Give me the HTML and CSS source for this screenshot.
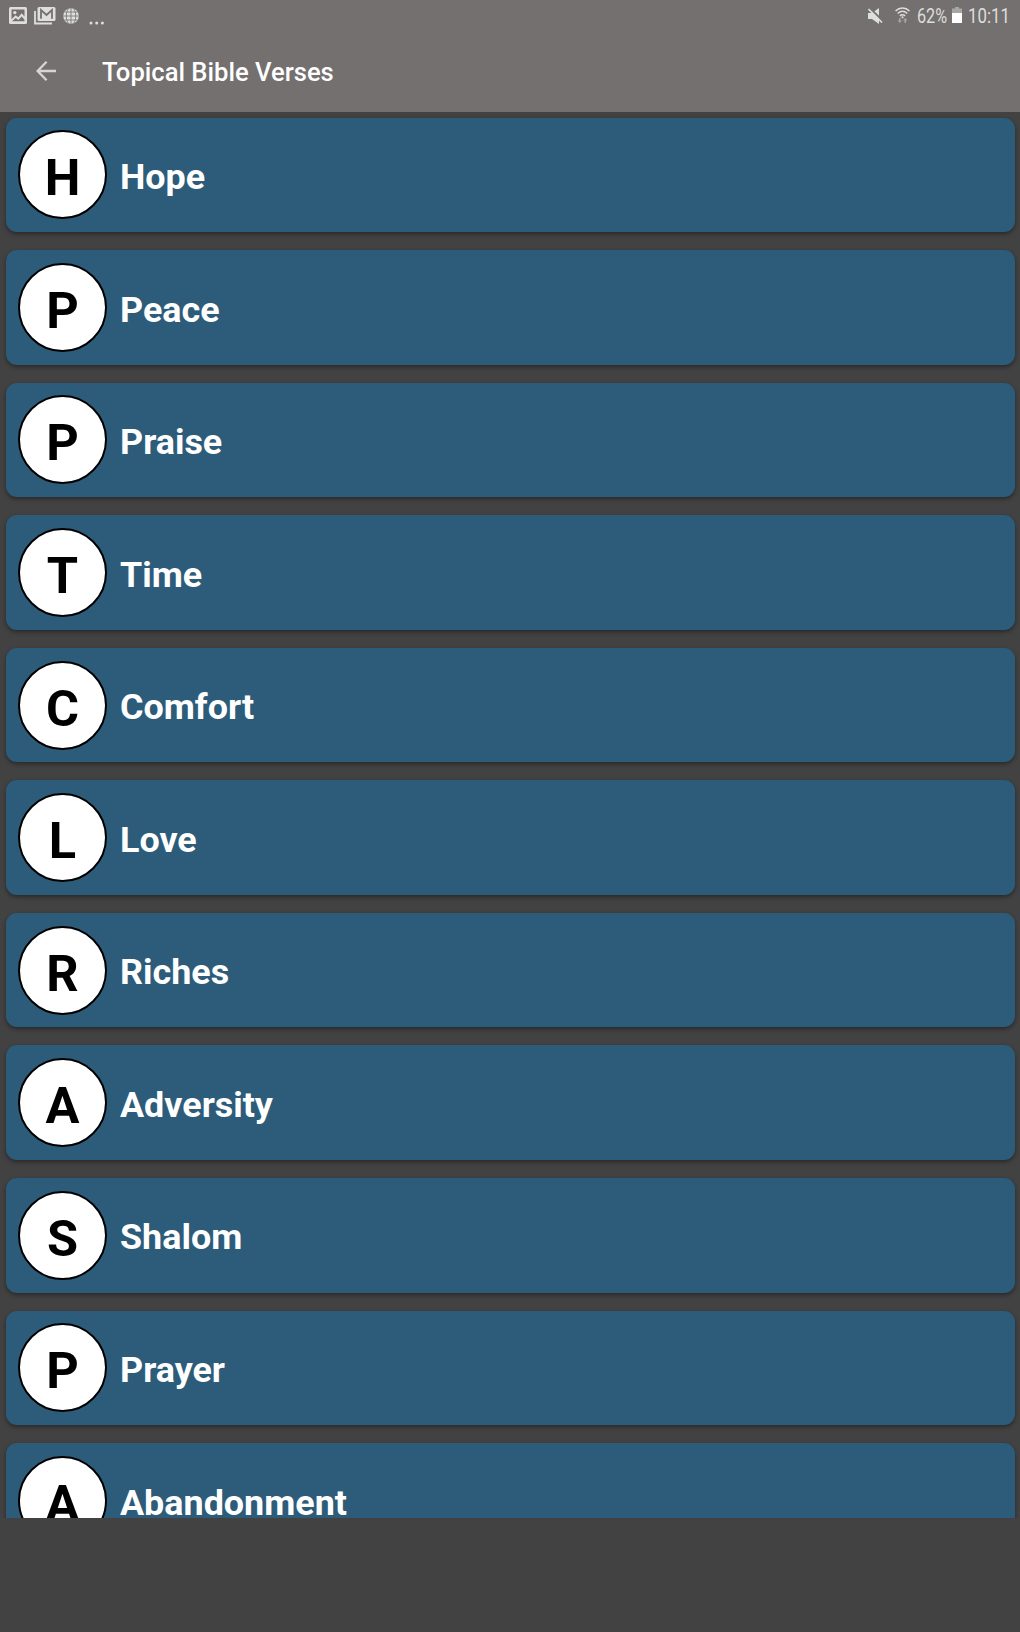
FILE: index.html
```html
<!DOCTYPE html>
<html lang="en">

<head>
    <meta charset="UTF-8">
    <meta name="viewport" content="width=device-width, initial-scale=1.0">
    <title>Topical Bible Verses</title>
    <link rel="stylesheet" href="styles.css">
</head>

<body>
    <div class="header">
        <div class="status-bar">
            <div class="status-left">
                <svg class="icon-image" width="18" height="18" viewBox="0 0 18 18">
                    <rect width="18" height="17" rx="1.500" fill="#dededc"/>
                    <path fill="#73706f" d="M2.500 2.500h13v7l-2.800-3.200-3.500 4-2.600-2-4.100 4z"/>
                    <circle cx="5.800" cy="5.600" r="1.700" fill="#dededc"/>
                    <path fill="#73706f" d="M3 14.300l3.700-3.300 2.700 2 3.300-3.600 2.800 3.300v1.600z"/>
                </svg>
                <svg class="icon-mail" width="22" height="18" viewBox="0 0 22 18">
                    <path fill="none" stroke="#dededc" stroke-width="1.800" d="M1 4v12.500h17"/>
                    <rect x="3.500" y="0" width="18" height="14" rx="1.500" fill="#dededc"/>
                    <path fill="none" stroke="#73706f" stroke-width="1.800" d="M7 11.700V3l5.500 5L18 3v8.700"/>
                </svg>
                <svg class="icon-globe" width="16" height="16" viewBox="0 0 16 16">
                    <circle cx="8" cy="8" r="7.800" fill="#dededc"/>
                    <path fill="none" stroke="#73706f" stroke-width="0.800" d="M8 0v16M0 8h16M1.500 4h13M1.500 12h13M5.500.5c-3 4.500-3 10.500 0 15M10.500.5c3 4.500 3 10.500 0 15"/>
                </svg>
                <svg class="icon-more" width="16" height="4" viewBox="0 0 16 4">
                    <circle cx="2" cy="2" r="1.500" fill="#dededc"/>
                    <circle cx="7.700" cy="2" r="1.500" fill="#dededc"/>
                    <circle cx="13.400" cy="2" r="1.500" fill="#dededc"/>
                </svg>
            </div>
            <div class="status-right">
                <svg class="icon-mute" width="15" height="16" viewBox="0 0 15 16">
                    <path fill="#dededc" d="M0 5h4l7-5v16l-7-5H0z"/>
                    <path stroke="#73706f" stroke-width="2" d="M1.500 0l13.500 13"/>
                    <path stroke="#dededc" stroke-width="1.700" d="M.5 1l13.500 13.500"/>
                </svg>
                <svg class="icon-wifi" width="15" height="17" viewBox="0 0 15 17">
                    <path fill="none" stroke="#dededc" stroke-width="1.500" d="M.5 4c4-4 10-4 14 0M2.700 6.500c3-2.700 6.600-2.700 9.600 0M4.900 8.900c1.700-1.500 3.500-1.500 5.200 0"/>
                    <circle cx="7.500" cy="10.300" r="1.100" fill="#dededc"/>
                    <path fill="#a6a3a2" d="M4 11h1.500v2.500H7l-2.200 2.500-2.300-2.500H4zM9.500 16H11v-2.500h1.500L10.300 11 8 13.500h1.500z"/>
                </svg>
                <span class="battery-text">62%</span>
                <svg class="icon-battery" width="10" height="16" viewBox="0 0 10 16">
                    <path fill="#a8a6a5" d="M3 0h4v1.500h3V7H0V1.500h3z"/>
                    <path fill="#fff" d="M0 6h10v10H0z"/>
                </svg>
                <span class="clock">10:11</span>
            </div>
        </div>
        <div class="toolbar">
            <svg class="back" width="20" height="20" viewBox="0 0 20 20">
                <path fill="none" stroke="#d6d5d4" stroke-width="2.300" d="M20 10H1.800M10.600.8L1.600 10l9 9.200"/>
            </svg>
            <h1>Topical Bible Verses</h1>
        </div>
    </div>
    <div class="topics">
        <div class="card">
            <div class="letter">H</div>
            <div class="name">Hope</div>
        </div>
        <div class="card">
            <div class="letter">P</div>
            <div class="name">Peace</div>
        </div>
        <div class="card">
            <div class="letter">P</div>
            <div class="name">Praise</div>
        </div>
        <div class="card">
            <div class="letter">T</div>
            <div class="name">Time</div>
        </div>
        <div class="card">
            <div class="letter">C</div>
            <div class="name">Comfort</div>
        </div>
        <div class="card">
            <div class="letter">L</div>
            <div class="name">Love</div>
        </div>
        <div class="card">
            <div class="letter">R</div>
            <div class="name">Riches</div>
        </div>
        <div class="card">
            <div class="letter">A</div>
            <div class="name">Adversity</div>
        </div>
        <div class="card">
            <div class="letter">S</div>
            <div class="name">Shalom</div>
        </div>
        <div class="card">
            <div class="letter">P</div>
            <div class="name">Prayer</div>
        </div>
        <div class="card">
            <div class="letter">A</div>
            <div class="name">Abandonment</div>
        </div>
    </div>
</body>

</html>
```
FILE: styles.css
```css
* {
    box-sizing: border-box;
}

body {
    margin: 0;
    height: 1632px;
    overflow: hidden;
    font-family: Roboto, sans-serif;
    background: #424242;
}

.header {
    height: 112px;
    background-color: #73706f;
}

.status-bar {
    display: flex;
    justify-content: space-between;
    height: 32px;
    padding: 0 11px 0 9px;
}

.status-left,
.status-right {
    display: flex;
    align-items: flex-start;
}

.icon-image {
    margin-top: 7px;
}

.icon-mail {
    margin: 7px 0 0 7px;
}

.icon-globe {
    margin: 8px 0 0 7px;
}

.icon-more {
    margin: 21px 0 0 10px;
}

.icon-mute {
    margin: 8px 12px 0 0;
}

.icon-wifi {
    margin: 7px 7px 0 0;
}

.icon-battery {
    margin: 7px 6px 0 5px;
}

.battery-text,
.clock {
    color: #dededc;
    font-size: 20px;
    line-height: 33px;
    transform-origin: left;
    white-space: nowrap;
}

.battery-text {
    width: 30px;
    transform: scaleX(0.81);
}

.clock {
    width: 41px;
    transform: scaleX(0.84);
}

.toolbar {
    display: flex;
    align-items: center;
    height: 80px;
    padding: 0 36px;
}

.toolbar h1 {
    margin: 0 0 1px 46px;
    color: white;
    font-size: 25.6px;
    font-weight: 500;
    line-height: 80px;
}

.back {
    margin-bottom: 2px;
}

.topics {
    height: 1405.5px;
    padding: 5.5px 5px 0 5.5px;
    overflow: hidden;
}

.card {
    display: flex;
    align-items: center;
    height: 114.5px;
    margin-bottom: 18.07px;
    padding: 0 12.5px;
    background-color: #2d5c7a;
    border-radius: 11px;
    box-shadow: 0 2px 4px rgba(0, 0, 0, 0.4);
}

.letter {
    width: 89px;
    height: 89px;
    border: 2px solid black;
    border-radius: 50%;
    background-color: white;
    color: black;
    font-size: 50.5px;
    font-weight: bold;
    line-height: 91.5px;
    text-align: center;
}

.name {
    margin: 4.4px 0 0 13px;
    color: white;
    font-size: 35.9px;
    font-weight: bold;
}
```
